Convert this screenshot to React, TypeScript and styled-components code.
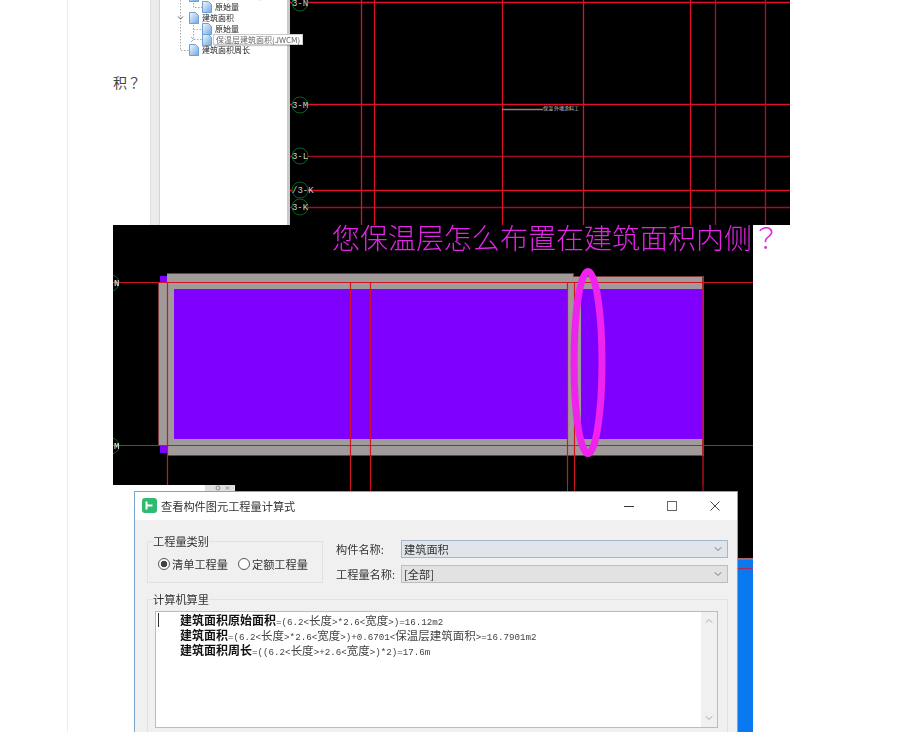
import styled, { createGlobalStyle } from 'styled-components';
import { ChevronDown, ChevronUp } from 'lucide-react';

const CJK = '"Noto Sans CJK SC", "Liberation Sans", sans-serif';
const CJK_JP = '"Noto Sans CJK JP", "Noto Sans CJK SC", sans-serif';
const MONO = '"Liberation Mono", "Noto Sans CJK SC", monospace';

const GlobalStyle = createGlobalStyle`
  html, body {
    margin: 0;
    height: 732px;
    overflow: hidden;
    background: #fff;
    font-family: ${CJK};
  }
  * { box-sizing: border-box; }
`;

const Article = styled.main`
  margin-left: 67px;
  height: 732px;
  border-left: 1px solid #ececec;
  padding-left: 45px;
  overflow: hidden;
`;

const IntroRow = styled.section`
  display: flex;
  height: 225px;
`;

const IntroText = styled.p`
  margin: 0;
  width: 37px;
  padding-top: 72px;
  font-family: ${CJK_JP};
  font-size: 14px;
  line-height: 20px;
  color: #444;
`;

const TreeShot = styled.div`
  display: flex;
  width: 640px;
  height: 225px;
  filter: blur(0.35px);
`;

const Splitter = styled.div`
  width: 10px;
  background: #ececec;
  border-left: 1px solid #ddd;
  border-right: 1px solid #d4d4d4;
`;

const TreePanel = styled.div`
  position: relative;
  width: 127px;
  background: #fff;
`;

const TreeList = styled.ul`
  list-style: none;
  margin: -9px 0 0;
  padding: 0;
`;

const TreeRow = styled.li<{ $depth: number }>`
  display: flex;
  align-items: center;
  gap: 3px;
  height: 10.8px;
  padding-left: ${p => 29 + p.$depth * 13}px;
  font-size: 8px;
  line-height: 10px;
  color: #222;
  white-space: nowrap;
`;

const TreeLines = styled.svg`
  position: absolute;
  left: 0;
  top: 0;
`;

const Tooltip = styled.div`
  position: absolute;
  left: 53px;
  top: 34px;
  width: 90px;
  height: 11px;
  padding-left: 2px;
  background: #fff;
  border: 1px solid #ccc;
  box-shadow: 1px 1px 1px rgba(0, 0, 0, 0.2);
  font-size: 8px;
  line-height: 9px;
  color: #666;
  white-space: nowrap;
  z-index: 2;
`;

const PanelEdge = styled.div`
  width: 3px;
  background: #c9c9c9;
`;

const CadCanvas = styled.svg`
  display: block;
  background: #000;
`;

const SectionRow = styled.section`
  position: relative;
  width: 640px;
  height: 260px;
`;

const Blurred = styled.div`
  filter: blur(0.35px);
`;

const Annotation = styled.div`
  position: absolute;
  left: 219px;
  top: -7px;
  font-family: ${CJK_JP};
  font-size: 28px;
  line-height: 38px;
  font-weight: 300;
  color: #e124e6;
  white-space: nowrap;
`;

const FormulaShot = styled.section`
  width: 640px;
  height: 247px;
`;

const TopStrip = styled.svg`
  display: block;
`;

const ShotBody = styled.div`
  display: flex;
  height: 241px;
`;

const WhiteGap = styled.div`
  width: 21px;
`;

const Dialog = styled.div`
  display: flex;
  flex-direction: column;
  width: 604px;
  border: 1px solid #7ca6c9;
  border-bottom: none;
  overflow: hidden;
  background: #f0f0f0;
  filter: blur(0.3px);
`;

const TitleBar = styled.header`
  display: flex;
  align-items: center;
  height: 28px;
  flex: none;
  padding: 0 0 1px 7px;
  background: #fff;
`;

const TitleText = styled.span`
  margin-left: 4px;
  flex: 1;
  font-size: 11.2px;
  line-height: 14px;
  color: #333;
`;

const WindowButton = styled.svg`
  display: block;
  margin-right: 33px;
  &:last-child {
    margin-right: 17px;
  }
`;

const DialogBody = styled.div`
  flex: 1;
  padding: 14px 9px 0 12px;
`;

const TopControls = styled.div`
  display: flex;
  gap: 13px;
`;

const Group = styled.fieldset<{ $width: number }>`
  margin: 0;
  padding: 0 7px;
  width: ${p => p.$width}px;
  border: 1px solid #e1e1e1;
  min-width: 0;
`;

const GroupTitle = styled.legend`
  margin-left: -2px;
  padding: 0;
  font-size: 11.2px;
  line-height: 14px;
  color: #333;
`;

const RadioRow = styled.div`
  display: flex;
  align-items: center;
  height: 34px;
  padding: 0 3px;
  margin-top: -1px;
`;

const RadioLabel = styled.label`
  display: flex;
  align-items: center;
  gap: 2px;
  margin-right: 10px;
  font-size: 11.2px;
  color: #333;
  white-space: nowrap;
`;

const RadioMark = styled.span<{ $on?: boolean }>`
  display: block;
  width: 12px;
  height: 12px;
  border: 1px solid #555;
  border-radius: 50%;
  background: ${p => (p.$on ? 'radial-gradient(circle, #444 0 3px, #fff 3.6px)' : '#fff')};
`;

const FieldColumn = styled.div`
  display: flex;
  flex-direction: column;
  gap: 7px;
  margin-top: 6px;
  flex: 1;
`;

const FieldRow = styled.div`
  display: flex;
  align-items: center;
`;

const FieldLabel = styled.span`
  width: 65px;
  font-size: 11.2px;
  color: #333;
  white-space: nowrap;
`;

const SelectBox = styled.div<{ $focused?: boolean }>`
  display: flex;
  align-items: center;
  justify-content: space-between;
  flex: 1;
  height: 18px;
  padding: 0 3px 0 2px;
  background: ${p => (p.$focused ? '#dfe5ea' : '#e2e2e2')};
  border: 1px solid ${p => (p.$focused ? '#a5b7c6' : '#bdbdbd')};
  font-size: 11.2px;
  color: #333;
  svg { color: #777; }
`;

const OutputGroup = styled(Group)`
  margin-top: 9px;
  height: 180px;
`;

const Editor = styled.div`
  position: relative;
  display: flex;
  width: 563px;
  height: 117px;
  margin-top: 5px;
  background: #fff;
  border: 1px solid #bcbcbc;
`;

const Caret = styled.i`
  position: absolute;
  left: 2px;
  top: 1px;
  width: 1px;
  height: 14px;
  background: #333;
`;

const FormulaLines = styled.div`
  flex: 1;
  padding: 1px 0 0 24px;
`;

const FormulaLine = styled.div`
  display: flex;
  align-items: baseline;
  height: 15px;
  line-height: 14px;
  white-space: nowrap;
  color: #333;
`;

const Strong = styled.b`
  font-size: 12px;
  font-weight: 700;
  color: #111;
`;

const Cn = styled.span`
  font-size: 11.5px;
  color: #444;
`;

const Num = styled.span`
  font-family: ${MONO};
  font-size: 9.2px;
  color: #444;
`;

const ScrollTrack = styled.div`
  display: flex;
  flex-direction: column;
  justify-content: space-between;
  align-items: center;
  width: 16px;
  padding: 3px 0;
  background: #f0f0f0;
  svg { color: #a9a9a9; }
`;

const SideStrip = styled.div`
  width: 15px;
  display: flex;
  flex-direction: column;
`;

const SideBlack = styled.div`
  height: 67px;
  background: #000;
`;

const SideBand = styled.div`
  height: 2px;
  background: #a4686c;
`;

const SideBlue = styled.div`
  flex: 1;
  background: #0a78ee;
  position: relative;
  &::after {
    content: '';
    position: absolute;
    left: 0;
    right: 0;
    top: 8px;
    height: 1px;
    background: #b0285a;
  }
`;

const DocIcon = () => (
  <svg width="10" height="12" viewBox="0 0 10 12" style={{ flex: 'none' }}>
    <defs>
      <linearGradient id="doc" x1="0" y1="0" x2="1" y2="1">
        <stop offset="0" stopColor="#f4f9ff" />
        <stop offset="1" stopColor="#6fa8e0" />
      </linearGradient>
    </defs>
    <path d="M.5.5h6l3 3v8h-9z" fill="url(#doc)" stroke="#6f9fd2" />
  </svg>
);

const GridLabel = ({ y, text, x = 300 }: { y: number; text: string; x?: number }) => (
  <g>
    <circle cx={x - 290} cy={y} r="8" fill="#000" stroke="#0c7a2c" strokeWidth="0.8" />
    <text x={x - 290} y={y + 3} textAnchor="middle" fontFamily={MONO} fontSize="9" fill="#c4d4c4">
      {text}
    </text>
  </g>
);

const TopCad = () => (
  <CadCanvas width="500" height="225" viewBox="0 0 500 225">
    <g stroke="#e0102c" strokeWidth="1.3">
      <path d="M0 2.5H500M0 104.5H500M0 190.5H500" />
      <path d="M0 156.5H500M0 207.5H500" stroke="#a01024" />
      <path d="M71.5 0V225M84.5 0V225M212.5 0V225M293.5 0V225M400.5 0V225" />
      <path d="M425.5 0V225M475.5 0V225" stroke="#b01028" />
    </g>
    <GridLabel y={3} text="3-N" />
    <GridLabel y={105} text="3-M" />
    <GridLabel y={156} text="3-L" />
    <circle cx="10" cy="190" r="8" fill="#000" stroke="#0c7a2c" strokeWidth="0.8" />
    <text x="2" y="193" fontFamily={MONO} fontSize="9" fill="#c4d4c4">/3-K</text>
    <GridLabel y={207} text="3-K" />
    <path d="M212 109.5H253" stroke="#9a7a7a" strokeWidth="1.4" />
    <text x="253" y="110" fontFamily={CJK} fontSize="5" fill="#c8c8c8">保温 外墙涂料工</text>
  </CadCanvas>
);

const PlanCad = () => (
  <CadCanvas width="640" height="260" viewBox="0 0 640 260">
    {/* dark outline of the walls */}
    <rect x="54" y="48" width="407" height="9" fill="#7c3c3c" />
    <rect x="54" y="51" width="537" height="180" fill="#7c3c3c" />
    <rect x="45" y="58" width="17" height="162" fill="#7c3c3c" />
    {/* wall fill */}
    <rect x="54" y="49" width="406" height="8" fill="#a09a9a" />
    <rect x="54" y="52" width="535" height="178" fill="#a09a9a" />
    <rect x="46" y="58" width="16" height="162" fill="#a09a9a" />
    <rect x="61" y="64" width="529" height="150" fill="#7f00ff" />
    <rect x="455" y="64" width="13" height="150" fill="#a09a9a" />
    <rect x="47" y="51" width="7" height="7" fill="#7f00ff" />
    <rect x="47" y="221" width="7" height="7" fill="#7f00ff" />
    <g stroke="#d01420" strokeWidth="1.2" fill="none">
      <path d="M0 57.5H640M0 220.5H640" />
      <path d="M54.5 57V260M237.5 57V260M257.5 57V260M454.5 57V260M461.5 57V260M590 57V260" />
    </g>
    <circle cx="-2" cy="58" r="8" fill="none" stroke="#0c7a2c" strokeWidth="0.8" />
    <circle cx="-2" cy="221" r="8" fill="none" stroke="#0c7a2c" strokeWidth="0.8" />
    <text x="1" y="61" fontFamily={MONO} fontSize="9" fontWeight="700" fill="#c4d4c4">N</text>
    <text x="1" y="224" fontFamily={MONO} fontSize="9" fontWeight="700" fill="#c4d4c4">M</text>
    <ellipse cx="475" cy="137.5" rx="14" ry="91" fill="none" stroke="#f022ee" strokeWidth="7" />
  </CadCanvas>
);

const AppIcon = () => (
  <svg width="15" height="15" viewBox="0 0 15 15" style={{ flex: 'none' }}>
    <rect width="15" height="15" rx="3" fill="#2dbb70" />
    <path d="M4.5 3.5v8M4.5 7.5h6" stroke="#fff" strokeWidth="2" fill="none" />
  </svg>
);

const Formula = () => (
  <FormulaLines>
    <FormulaLine>
      <Strong>建筑面积原始面积</Strong>
      <Num>=(6.2&lt;</Num><Cn>长度</Cn><Num>&gt;*2.6&lt;</Num><Cn>宽度</Cn><Num>&gt;)=16.12m2</Num>
    </FormulaLine>
    <FormulaLine>
      <Strong>建筑面积</Strong>
      <Num>=(6.2&lt;</Num><Cn>长度</Cn><Num>&gt;*2.6&lt;</Num><Cn>宽度</Cn><Num>&gt;)+0.6701&lt;</Num>
      <Cn>保温层建筑面积</Cn><Num>&gt;=16.7901m2</Num>
    </FormulaLine>
    <FormulaLine>
      <Strong>建筑面积周长</Strong>
      <Num>=((6.2&lt;</Num><Cn>长度</Cn><Num>&gt;+2.6&lt;</Num><Cn>宽度</Cn><Num>&gt;)*2)=17.6m</Num>
    </FormulaLine>
  </FormulaLines>
);

export default function App() {
  return (
    <Article>
      <GlobalStyle />
      <IntroRow>
        <IntroText>积？</IntroText>
        <TreeShot>
          <Splitter />
          <TreePanel>
            <TreeLines width="127" height="60" viewBox="0 0 127 60">
              <g stroke="#aaa" strokeDasharray="1.5 1.5" fill="none">
                <path d="M20.5 0V50.5H29M33.5 0V7.5H42M33.5 22V39.5H42M33.5 29.5H42" />
              </g>
              <path d="M18 16.5l2.5 2.5 2.5-2.5" stroke="#555" fill="none" />
              <path d="M31 37l2.5 2.5-2.5 2.5" stroke="#aaa" fill="none" />
            </TreeLines>
            <TreeList>
              <TreeRow $depth={0}><DocIcon />建筑面积原始面积</TreeRow>
              <TreeRow $depth={1}><DocIcon />原始量</TreeRow>
              <TreeRow $depth={0}><DocIcon />建筑面积</TreeRow>
              <TreeRow $depth={1}><DocIcon />原始量</TreeRow>
              <TreeRow $depth={1}><DocIcon /></TreeRow>
              <TreeRow $depth={0}><DocIcon />建筑面积周长</TreeRow>
            </TreeList>
            <Tooltip>保温层建筑面积(JWCM)</Tooltip>
          </TreePanel>
          <PanelEdge />
          <TopCad />
        </TreeShot>
      </IntroRow>

      <SectionRow>
        <Blurred>
          <PlanCad />
        </Blurred>
        <Annotation>您保温层怎么布置在建筑面积内侧？</Annotation>
      </SectionRow>

      <FormulaShot>
        <TopStrip width="640" height="6" viewBox="0 0 640 6">
          <rect x="122" width="518" height="6" fill="#000" />
          <rect x="92" width="30" height="6" fill="#dedede" />
          <circle cx="105" cy="3" r="2" fill="none" stroke="#888" />
          <path d="M113 1.5l3 3M116 1.5l-3 3" stroke="#888" />
          <path d="M237.5 0V6M257.5 0V6M454.5 0V6M461.5 0V6M590 0V6" stroke="#c81420" />
        </TopStrip>
        <ShotBody>
          <WhiteGap />
          <Dialog>
            <TitleBar>
              <AppIcon />
              <TitleText>查看构件图元工程量计算式</TitleText>
              <WindowButton width="10" height="10" viewBox="0 0 10 10">
                <path d="M0 5.5H10" stroke="#333" />
              </WindowButton>
              <WindowButton width="10" height="10" viewBox="0 0 10 10">
                <rect x=".5" y=".5" width="9" height="9" fill="none" stroke="#666" />
              </WindowButton>
              <WindowButton width="10" height="10" viewBox="0 0 10 10">
                <path d="M.5.5l9 9M9.5.5l-9 9" stroke="#444" />
              </WindowButton>
            </TitleBar>
            <DialogBody>
              <TopControls>
                <Group $width={176}>
                  <GroupTitle>工程量类别</GroupTitle>
                  <RadioRow>
                    <RadioLabel><RadioMark $on />清单工程量</RadioLabel>
                    <RadioLabel><RadioMark />定额工程量</RadioLabel>
                  </RadioRow>
                </Group>
                <FieldColumn>
                  <FieldRow>
                    <FieldLabel>构件名称:</FieldLabel>
                    <SelectBox $focused>建筑面积<ChevronDown size={12} /></SelectBox>
                  </FieldRow>
                  <FieldRow>
                    <FieldLabel>工程量名称:</FieldLabel>
                    <SelectBox>[全部]<ChevronDown size={12} /></SelectBox>
                  </FieldRow>
                </FieldColumn>
              </TopControls>
              <OutputGroup $width={581}>
                <GroupTitle>计算机算里</GroupTitle>
                <Editor>
                  <Caret />
                  <Formula />
                  <ScrollTrack>
                    <ChevronUp size={12} />
                    <ChevronDown size={12} />
                  </ScrollTrack>
                </Editor>
              </OutputGroup>
            </DialogBody>
          </Dialog>
          <SideStrip>
            <SideBlack />
            <SideBand />
            <SideBlue />
          </SideStrip>
        </ShotBody>
      </FormulaShot>
    </Article>
  );
}
